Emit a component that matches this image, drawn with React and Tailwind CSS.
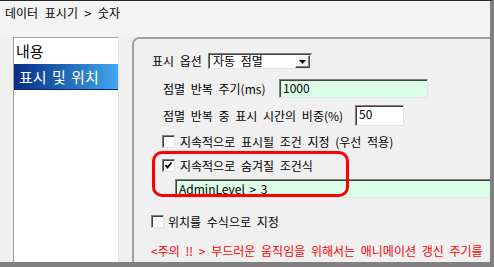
import React from 'react';

const FONT = "font-['Noto_Sans_CJK_KR','Noto_Sans',sans-serif]";

function CheckBox({ checked }) {
  return (
    <div className="w-[13px] h-[13px] shrink-0 bg-white border border-t-[#808080] border-l-[#808080] border-b-[#e3e3e3] border-r-[#e3e3e3] shadow-[inset_1px_1px_0_#404040] flex items-center justify-center">
      {checked && (
        <svg width="9" height="9" viewBox="0 0 9 9">
          <path d="M1.5 4 L3.5 6.5 L7.5 1.5" fill="none" stroke="#000" strokeWidth="1.8" />
        </svg>
      )}
    </div>
  );
}

function Field({ value, className }) {
  return (
    <div
      className={`shrink-0 border border-t-[#808080] border-l-[#808080] border-b-[#e3e3e3] border-r-[#e3e3e3] shadow-[inset_1px_1px_0_#404040] pl-[3px] leading-[15px] whitespace-nowrap [word-spacing:2px] ${className}`}
    >
      {value}
    </div>
  );
}

export default function App() {
  return (
    <div className={`w-[494px] h-[267px] overflow-hidden bg-[#f0f0f0] flex flex-col border-t border-t-[#262626] border-r-4 border-r-[#808080] border-b-[5px] border-b-[#808080] text-[12px] text-black [word-spacing:3px] ${FONT}`}>
      {/* title */}
      <div className="h-[36px] shrink-0 pl-[5px] pt-[4px] leading-[16px] text-[12px] bg-[#f3f3f3] [word-spacing:4px]">
        데이터 표시기 &gt; 숫자
      </div>

      <div className="flex-1 flex min-h-0">
        {/* menu list */}
        <div className="ml-[13px] w-[106px] shrink-0 bg-white border-t border-l border-[#a0a0a0] border-r border-r-[#e3e3e3] text-[15px] [word-spacing:2px]">
          <div className="h-[26px] leading-[26px] pl-[2px]">내용</div>
          <div className="h-[26px] leading-[25px] pl-[5px] text-white bg-gradient-to-r from-[#0a2c82] to-[#43a8f0] border-b border-b-[#0a236a]">
            표시 및 위치
          </div>
        </div>

        {/* settings group */}
        <div className="relative ml-[13px] flex-1 min-w-0 overflow-hidden border-t-2 border-l-2 border-[#a0a0a0] rounded-tl-[7px] flex flex-col">
          <div className="mt-[14px] h-[16px] flex items-center pl-[18px]">
            <span className="w-[56px] shrink-0 leading-[16px]">표시 옵션</span>
            <div className="w-[104px] h-[16px] flex items-center bg-white border border-t-[#808080] border-l-[#808080] border-b-[#e3e3e3] border-r-[#e3e3e3] shadow-[inset_1px_1px_0_#404040]">
              <span className="flex-1 pl-[4px] leading-[14px]">자동 점멸</span>
              <div className="w-[15px] h-[13px] mr-[1px] mt-[1px] bg-[#f0f0f0] border border-t-white border-l-white border-b-[#404040] border-r-[#404040] shadow-[inset_-1px_-1px_0_#808080] flex items-center justify-center">
                <svg width="7" height="4" viewBox="0 0 7 4">
                  <path d="M0 0 H7 L3.5 4 Z" fill="#000" />
                </svg>
              </div>
            </div>
          </div>

          <div className="mt-[10px] h-[19px] flex items-center pl-[29px]">
            <span className="w-[116px] shrink-0 leading-[16px] whitespace-nowrap">점멸 반복 주기(ms)</span>
            <Field value="1000" className="w-[149px] h-[19px] bg-[#dcfde8]" />
          </div>

          <div className="mt-[7px] h-[21px] flex items-center pl-[29px]">
            <span className="w-[192px] shrink-0 leading-[16px] whitespace-nowrap">점멸 반복 중 표시 시간의 비중(%)</span>
            <Field value="50" className="w-[49px] h-[21px] bg-white" />
          </div>

          <div className="mt-[9px] h-[13px] flex items-center pl-[28px] gap-[5px]">
            <CheckBox />
            <span className="leading-[16px] whitespace-nowrap">지속적으로 표시될 조건 지정 (우선 적용)</span>
          </div>

          <div className="mt-[11px] h-[13px] flex items-center pl-[28px] gap-[5px]">
            <CheckBox checked />
            <span className="leading-[16px] whitespace-nowrap">지속적으로 숨겨질 조건식</span>
          </div>

          <div className="mt-[7px] h-[19px] flex pl-[41px]">
            <Field value="AdminLevel > 3" className="w-[400px] h-[19px] bg-[#dcfde8] leading-[17px]" />
          </div>

          <div className="mt-[17px] h-[13px] flex items-center pl-[17px] gap-[4px]">
            <CheckBox />
            <span className="leading-[16px] whitespace-nowrap">위치를 수식으로 지정</span>
          </div>

          <div className="mt-[15px] pl-[17px] leading-[16px] whitespace-nowrap text-[#ff0000]">
            &lt;주의 !! &gt; 부드러운 움직임을 위해서는 애니메이션 갱신 주기를
          </div>

          {/* highlight annotation */}
          <div className="absolute left-[18px] top-[112px] w-[197px] h-[46px] border-[3px] border-[#ff0000] rounded-[10px] pointer-events-none" />
        </div>
      </div>
    </div>
  );
}
